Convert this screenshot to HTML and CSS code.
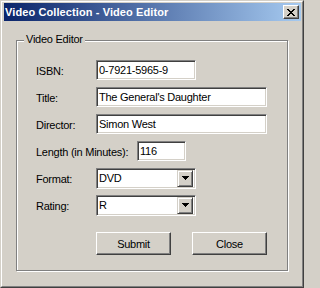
FILE: index.html
```html
<!DOCTYPE html>
<html>
<head>
<meta charset="utf-8">
<link rel="stylesheet" href="styles.css">
</head>
<body>
<div class="window">
  <div class="frame">
    <div class="titlebar">
      <span class="title">Video Collection - Video Editor</span>
      <div class="close-btn">
        <svg width="8" height="7" viewBox="0 0 8 7" shape-rendering="crispEdges">
          <path d="M0 0h2v1h-2zM6 0h2v1h-2zM1 1h2v1h-2zM5 1h2v1h-2zM2 2h4v1h-4zM3 3h2v1h-2zM2 4h4v1h-4zM1 5h2v1h-2zM5 5h2v1h-2zM0 6h2v1h-2zM6 6h2v1h-2z" fill="#000"/>
        </svg>
      </div>
    </div>
    <div class="content">
      <div class="group">
        <span class="legend">Video Editor</span>
        <div class="rows">
          <div class="row">
            <span class="label">ISBN:</span>
            <div class="field w-isbn">0-7921-5965-9</div>
          </div>
          <div class="row">
            <span class="label">Title:</span>
            <div class="field w-long">The General's Daughter</div>
          </div>
          <div class="row">
            <span class="label">Director:</span>
            <div class="field w-long">Simon West</div>
          </div>
          <div class="row">
            <span class="label label-wide">Length (in Minutes):</span>
            <div class="field w-len">116</div>
          </div>
          <div class="row">
            <span class="label">Format:</span>
            <div class="field combo">
              <span class="combo-text">DVD</span>
              <span class="drop-btn"><svg width="7" height="4" viewBox="0 0 7 4" shape-rendering="crispEdges"><path d="M0 0h7v1h-7zM1 1h5v1h-5zM2 2h3v1h-3zM3 3h1v1h-1z" fill="#000"/></svg></span>
            </div>
          </div>
          <div class="row">
            <span class="label">Rating:</span>
            <div class="field combo">
              <span class="combo-text">R</span>
              <span class="drop-btn"><svg width="7" height="4" viewBox="0 0 7 4" shape-rendering="crispEdges"><path d="M0 0h7v1h-7zM1 1h5v1h-5zM2 2h3v1h-3zM3 3h1v1h-1z" fill="#000"/></svg></span>
            </div>
          </div>
        </div>
        <div class="buttons">
          <div class="btn">Submit</div>
          <div class="btn">Close</div>
        </div>
      </div>
    </div>
  </div>
</div>
</body>
</html>
```
FILE: styles.css
```css
html, body {
  margin: 0;
  padding: 0;
  background: #d4d0c8;
}
body {
  font-family: "Liberation Sans", Arial, sans-serif;
  font-size: 11px;
  letter-spacing: -0.25px;
  color: #000;
}
.window {
  width: 304px;
  height: 288px;
  box-sizing: border-box;
  border: 1px solid;
  border-color: #d4d0c8 #404040 #404040 #d4d0c8;
  background: #d4d0c8;
}
.frame {
  height: 100%;
  box-sizing: border-box;
  border: 1px solid;
  border-color: #fff #808080 #808080 #fff;
  padding: 1px 1px 2px 2px;
  display: flex;
  flex-direction: column;
}
.titlebar {
  height: 18px;
  flex: none;
  display: flex;
  align-items: center;
  justify-content: space-between;
  background: linear-gradient(to right, #0a246a, #a6caf0);
  color: #fff;
  padding: 0 2px 0 1px;
}
.title {
  font-weight: bold;
  font-size: 11px;
  letter-spacing: 0.1px;
}
.close-btn {
  width: 16px;
  height: 14px;
  box-sizing: border-box;
  border: 1px solid;
  border-color: #fff #404040 #404040 #fff;
  box-shadow: inset -1px -1px 0 #808080, inset 1px 1px 0 #d4d0c8;
  background: #d4d0c8;
  display: flex;
  align-items: center;
  justify-content: center;
}
.close-btn svg { display: block; margin-left: 0; }
.content {
  padding: 19px 12px 0 12px;
}
.group {
  position: relative;
  width: 272px;
  height: 231px;
  box-sizing: border-box;
  border: 1px solid #808080;
  box-shadow: inset 1px 1px 0 #fff, 1px 1px 0 #fff;
  padding: 19px 0 0 19px;
}
.legend {
  position: absolute;
  top: -8px;
  left: 7px;
  padding: 0 2px;
  background: #d4d0c8;
  line-height: 13px;
}
.rows {
  display: flex;
  flex-direction: column;
  gap: 7px;
}
.row {
  display: flex;
  align-items: center;
  height: 20px;
}
.label {
  width: 60px;
  flex: none;
  padding-top: 2px;
}
.label-wide { width: 101px; }
.field {
  height: 20px;
  box-sizing: border-box;
  border: 1px solid;
  border-color: #808080 #fff #fff #808080;
  box-shadow: inset 1px 1px 0 #404040, inset -1px -1px 0 #d4d0c8;
  background: #fff;
  padding: 0 2px;
  line-height: 18px;
  white-space: nowrap;
  overflow: hidden;
}
.w-isbn { width: 100px; }
.w-long { width: 171px; }
.w-len { width: 49px; }
.combo {
  width: 100px;
  height: 21px;
  display: flex;
  align-items: center;
  justify-content: space-between;
  padding: 0 2px 0 2px;
}
.drop-btn {
  width: 16px;
  height: 17px;
  box-sizing: border-box;
  border: 1px solid;
  border-color: #d4d0c8 #404040 #404040 #d4d0c8;
  box-shadow: inset 1px 1px 0 #fff, inset -1px -1px 0 #808080;
  background: #d4d0c8;
  display: flex;
  align-items: center;
  justify-content: center;
}
.drop-btn svg { display: block; }
.buttons {
  display: flex;
  gap: 21px;
  margin: 17px 0 0 60px;
}
.btn {
  width: 75px;
  height: 23px;
  box-sizing: border-box;
  border: 1px solid;
  border-color: #fff #404040 #404040 #fff;
  box-shadow: inset -1px -1px 0 #808080, inset 1px 1px 0 #d4d0c8;
  background: #d4d0c8;
  display: flex;
  align-items: center;
  justify-content: center;
}
```
